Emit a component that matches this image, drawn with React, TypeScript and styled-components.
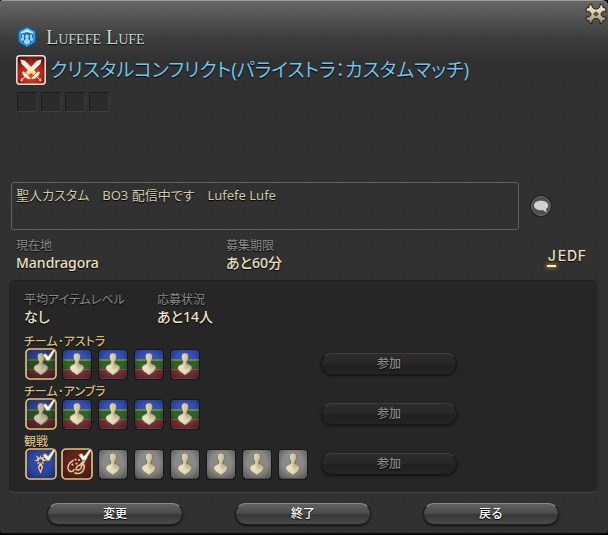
import React from "react";
import styled, { createGlobalStyle } from "styled-components";

const GlobalStyle = createGlobalStyle`
  * { box-sizing: border-box; }
  html, body, #root { height: 100%; }
  body {
    margin: 0;
    background: #000;
    font-family: "Noto Sans", "Noto Sans CJK JP", sans-serif;
    font-feature-settings: "palt";
  }
`;

const Window = styled.main`
  display: flex;
  flex-direction: column;
  min-height: 100%;
  border-top: 1px solid #a39a8c;
  border-bottom: 2px solid #0b0a06;
  border-radius: 3px 6px 4px 4px;
  color: #f0e2c4;
  text-shadow: 0 1px 1px #000;
  background:
    radial-gradient(circle at 6px 7px, rgba(0, 0, 0, 0.07) 0 1px, transparent 2px) 0 0 / 32px 32px,
    radial-gradient(circle at 20px 21px, rgba(0, 0, 0, 0.06) 0 1px, transparent 2px) 0 0 / 32px 32px,
    linear-gradient(#676767 0, #545454 16px, #3d3c3d 38px, #313131 60px, #313131 100%);
`;

const TitleBar = styled.header`
  display: flex;
  align-items: flex-start;
  justify-content: space-between;
  height: 54px;
  padding: 2px 1px 0 17px;
`;

const Owner = styled.div`
  display: flex;
  align-items: center;
  gap: 9px;
  padding-top: 20px;
`;

const OwnerName = styled.h1`
  margin: 0;
  font: 400 20px/28px "Liberation Serif", serif;
  font-variant-caps: small-caps;
  color: #c3d8cf;
`;

const IconButton = styled.button`
  display: grid;
  place-items: center;
  padding: 0;
  border: 0;
  background: none;
  cursor: pointer;
`;

const Duty = styled.section`
  display: flex;
  align-items: center;
  gap: 4px;
  padding: 0 16px;
`;

const DutyName = styled.h2`
  margin: 0;
  font-size: 19px;
  font-weight: 400;
  line-height: 30px;
  color: #72c3ec;
`;

const Conditions = styled.div`
  display: flex;
  gap: 4px;
  padding: 7px 17px 0;
`;

const ConditionSlot = styled.span`
  width: 20px;
  height: 20px;
  border: 1px solid;
  border-color: #1b1b1b #3c3c3c #404040 #1e1e1e;
  border-radius: 2px;
  background: #2b2b2b;
`;

const CommentRow = styled.section`
  display: flex;
  align-items: center;
  gap: 10px;
  margin-top: 70px;
  padding: 0 55px 0 11px;
`;

const Comment = styled.textarea`
  flex: 1;
  height: 48px;
  padding: 3px 4px;
  border: 1px solid #626262;
  border-radius: 3px;
  outline: 0;
  resize: none;
  background: transparent;
  color: #d2c9ac;
  font: 400 13px/18px "Noto Sans", "Noto Sans CJK JP", sans-serif;
  font-feature-settings: "palt";
  text-shadow: inherit;
`;

const InfoRow = styled.section`
  display: grid;
  grid-template-columns: 210px 1fr auto;
  padding: 8px 21px 0 16px;
`;

const Stats = styled.div`
  display: grid;
  grid-template-columns: 133px 1fr;
`;

const Label = styled.dt`
  font-size: 12px;
  line-height: 16px;
  color: #8b8b8b;
`;

const Value = styled.dd`
  margin: 0;
  font-size: 14px;
  font-weight: 500;
  line-height: 18px;
`;

const Fact = styled.dl`
  margin: 0;
`;

const Languages = styled.div`
  display: flex;
  padding-top: 11px;
`;

const Language = styled.span<{ $on?: boolean }>`
  display: flex;
  flex-direction: column;
  align-items: center;
  min-width: 10px;
  font: 500 14px/14px Inter, sans-serif;
  color: #efe0c2;

  &::after {
    content: "";
    width: 9px;
    height: 2px;
    margin-top: 2px;
    background: ${({ $on }) => ($on ? "#fffbe6" : "transparent")};
    box-shadow: ${({ $on }) => ($on ? "0 0 4px 1px #b0741b" : "none")};
  }
`;

const Panel = styled.section`
  margin: 8px 10px 0 9px;
  padding: 11px 14px 11px;
  border: 1px solid;
  border-color: #1f1f1f #2b2b2b #454545 #222;
  border-radius: 6px;
  background: #262626;
`;

const Teams = styled.div`
  display: flex;
  flex-direction: column;
  padding-top: 5px;
`;

const Team = styled.section`
  display: grid;
  grid-template-columns: 297px 136px;
  align-items: end;
  height: 50px;
`;

const TeamName = styled.h3`
  margin: 0;
  font-size: 12px;
  font-weight: 500;
  line-height: 12px;
  color: #d9b97d;
`;

const Seats = styled.div`
  display: flex;
  gap: 4px;
  padding-left: 1px;
  height: 33px;
`;

const PillButton = styled.button`
  height: 22px;
  width: 136px;
  padding: 0;
  border: 1px solid #1d1d1d;
  border-top-color: #8a8a8a;
  border-radius: 11px;
  background: linear-gradient(#616161 0, #4c4c4c 45%, #373737 55%, #4a4a4a 100%);
  box-shadow: 0 1px 2px #111;
  color: #fff;
  font: 500 12px/20px "Noto Sans", "Noto Sans CJK JP", sans-serif;
  text-shadow: 0 1px 1px #000;
  cursor: pointer;

  &:disabled {
    margin-bottom: 6px;
    border-color: #191919;
    border-top-color: #3f3f3f;
    background: linear-gradient(#2c2c2c 0, #272727 50%, #202020 55%, #242424 100%);
    color: #8b8b8b;
    cursor: default;
  }
`;

const Actions = styled.footer`
  display: grid;
  grid-template-columns: repeat(3, 1fr);
  justify-items: center;
  padding: 10px 23px 8px 21px;
`;

const PartyIcon = () => (
  <svg width="20" height="22" viewBox="0 0 20 22" aria-hidden="true">
    <path d="M10 1.500 18 5.500v10l-8 5-8-5v-10z" fill="#1278c4" stroke="#0d5fae" strokeWidth="2" strokeLinejoin="round" />
    <path d="M10 2.500 17 6v9.300l-7 4.400-7-4.400V6z" fill="#1b78c8" stroke="#55bdfb" strokeWidth="1.200" strokeLinejoin="round" />
    <path d="M4 6.200 10 3.200l6 3v1.600L10 6 4 7.800z" fill="#c8f2ff" />
    <g fill="#8fd8ff" stroke="#0b4f98" strokeWidth=".8">
      <path d="M3.300 15c0-2.500.4-3.200 1.400-3.700C3.600 9.500 4.200 7.800 5.900 7.800s2.300 1.700 1.300 3.500l.8 4.500zM16.700 15c0-2.500-.4-3.200-1.400-3.700 1.100-1.800.5-3.500-1.200-3.500s-2.300 1.700-1.300 3.500l-.8 4.500z" />
      <path d="M6.300 17.200c0-2.700.6-3.700 2.200-4.200-1.500-2.300-.8-4.900 1.500-4.900s3 2.600 1.500 4.900c1.600.5 2.200 1.500 2.200 4.200L10 19.400z" />
    </g>
  </svg>
);

const SwordsIcon = () => (
  <svg width="30" height="30" viewBox="0 0 30 30" aria-hidden="true">
    <defs>
      <radialGradient id="duty" cx=".5" cy=".65" r=".65">
        <stop offset="0" stopColor="#e8432f" />
        <stop offset=".6" stopColor="#b3241d" />
        <stop offset="1" stopColor="#5f1613" />
      </radialGradient>
      <linearGradient id="steel" x1="0" y1="0" x2="0" y2="1">
        <stop offset="0" stopColor="#fff" />
        <stop offset=".6" stopColor="#fff3cd" />
        <stop offset="1" stopColor="#ffc95c" />
      </linearGradient>
    </defs>
    <rect x=".8" y=".8" width="28.400" height="28.400" rx="3" fill="url(#duty)" stroke="#e9e3df" strokeWidth="1.500" />
    <g fill="url(#steel)">
      <path d="M25.500 4.500 21 5.800 9.600 17.600l2.800 2.800L24.300 9z" />
      <path d="m6.200 17 1.500-.6 7 6.600-.8 1.300-2.800-.6-1.800-1.600-2.400 2.200.2 1.200-1.800.9-.9-.9.800-1.900 1.300.1 2.100-2.300-1.700-1.700z" />
      <path d="M4.500 4.500 9 5.800l11.400 11.800-2.800 2.800L5.700 9z" />
      <path d="m23.800 17-1.500-.6-7 6.600.8 1.300 2.800-.6 1.800-1.600 2.400 2.200-.2 1.200 1.800.9.9-.9-.8-1.900-1.300.1-2.100-2.300 1.700-1.700z" />
    </g>
  </svg>
);

const CloseIcon = () => (
  <svg width="22" height="22" viewBox="0 0 22 22" aria-hidden="true">
    <defs>
      <linearGradient id="brass" x1="0" y1="0" x2="0" y2="1">
        <stop offset="0" stopColor="#f0e8c8" />
        <stop offset=".45" stopColor="#e0d3a8" />
        <stop offset="1" stopColor="#8d7568" />
      </linearGradient>
    </defs>
    <path
      d="M7 1c-.5 2.500.5 5 4 5s4.500-2.500 4-5l2.800 1.200L18 4.500l2.500.5.8 3.300c-3-.3-5.300.500-5.300 2.900s2.300 3.200 5.300 2.900L20.500 17l-2.500.5-.2 2.300L15 21c.5-2.500-.5-5.500-4-5.500S6.500 18.500 7 21l-2.800-1.200L4 17.500 1.500 17l-.8-2.900c3 .3 5.300-.5 5.300-2.900S3.700 8 .7 8.300L1.500 5 4 4.500l.2-2.300z"
      fill="url(#brass)" stroke="#1c1916" strokeWidth="1"
    />
    <path d="m11 8.200 3.200 2.800-3.200 2.800L7.800 11z" fill="#55534f" />
  </svg>
);

const ChatIcon = () => (
  <svg width="24" height="24" viewBox="0 0 24 24" aria-hidden="true">
    <circle cx="12" cy="12" r="11" fill="#1d1d1d" />
    <circle cx="12" cy="12" r="9.500" fill="#4c4f4e" stroke="#6c6f6e" strokeWidth="1" />
    <path d="M12 6.800c4.300 0 7.200 2 7.200 4.600 0 1.500-.8 2.600-2 3.400l.2 4-3-2.600c-5.200.6-9.400-1.600-9.400-4.800 0-2.600 2.900-4.600 7-4.600z" fill="#d2d0d0" />
  </svg>
);

type SeatKind = "any" | "free" | "tank" | "crafter";

const base: Record<SeatKind, string> = { any: "#3350bb", free: "#8a8a88", tank: "#2c48a6", crafter: "#60241f" };

const Seat = ({ kind, taken }: { kind: SeatKind; taken?: boolean }) => (
  <svg width="32" height="33" viewBox="0 1 32 33" role="img" aria-label={taken ? "taken" : "open"}>
    <defs>
      <clipPath id="tile"><rect x="2" y="3" width="28" height="28" rx="3" /></clipPath>
      <radialGradient id="shade" cx=".5" cy=".45" r=".72">
        <stop offset=".5" stopColor="#000" stopOpacity="0" />
        <stop offset="1" stopColor="#000" stopOpacity=".4" />
      </radialGradient>
      <linearGradient id="stone" x1="0" y1="0" x2="1" y2="0">
        <stop offset="0" stopColor="#efe5c6" />
        <stop offset=".5" stopColor="#d8cca8" />
        <stop offset="1" stopColor="#a89d80" />
      </linearGradient>
    </defs>
    <rect x="1" y="2" width="30" height="31" rx="4" fill="#171717" />
    <g clipPath="url(#tile)">
      <rect x="2" y="3" width="28" height="28" fill={base[kind]} />
      {kind === "any" && (
        <>
          <path d="M2 12h28v10H2z" fill="#2f6227" />
          <path d="M2 12h28v2H2z" fill="#6b8a34" />
          <path d="M2 22h28v9H2z" fill="#80323a" />
          <path d="M2 22h28v1H2z" fill="#9a5a4d" />
        </>
      )}
      <rect x="2" y="3" width="28" height="28" fill="url(#shade)" />
      {taken && kind === "any" && <rect x="2" y="3" width="28" height="28" fill="#1c1c1c" fillOpacity=".3" />}
    </g>
    <path d="M4 31.500h24" stroke="#4a4a4a" />
    {(kind === "any" || kind === "free") && (
      <g opacity={taken ? 0.85 : 1}>
        <path
          d="M16 6c2.400 0 3.700 1.500 3.600 4-.1 1.800-.7 3-1.400 4v2.600c2 1 4.500 2 5 3.700.3 1.900-1.200 3.700-2.500 4.700L16 28.200 11.300 25c-1.300-1-2.800-2.800-2.500-4.700.5-1.700 3-2.700 5-3.700V14c-.7-1-1.300-2.200-1.400-4-.1-2.500 1.200-4 3.600-4z"
          fill="url(#stone)" stroke="#35322a" strokeOpacity=".5" strokeWidth=".7"
        />
        <path d="M16.500 14.500c.8 0 1.200-.2 1.700-.5v2.600l-1.200 3z" fill="#7c735d" fillOpacity=".5" />
        <path d="m9.600 20.500 4.200-2.500 3 4.500 5.300-3.500-1.600 4.800L16 27z" fill="#f3e9c9" fillOpacity=".5" />
      </g>
    )}
    {kind === "tank" && (
      <g fill="#ecd69b" stroke="#16204c" strokeWidth=".4">
        <path d="m15.500 6.500 1 4 4.500-2.700-2.300 4.200 4.300 2-5 .6 1.700 3.400-3.200-1.700 2 3.700-3 7.500-3-7.500 2-3.700-3.200 1.700 1.700-3.400-5-.6 4.300-2-2.300-4.200 4.500 2.700z" />
        <circle cx="15.500" cy="14" r="1.700" fill="#2947a0" />
        <path d="m15.500 19 .8 1.500-.8 2.500-.8-2.500z" fill="#2947a0" />
      </g>
    )}
    {kind === "crafter" && (
      <g fill="none" stroke="#e6cc98" strokeWidth="1.500" strokeLinecap="round">
        <path d="M12 13.500c-4.500 2.500-6.200 7-4.300 9.700 1.600 2.200 4.800 1.600 5.300-.7M14 26c4 1.500 8-.5 9-4.500.5-2 .2-3.500-.8-5" />
        <path d="m26 10-7 8c-2.500.5-4.300 2.500-3.800 4.700 2.800.8 5.300-.5 5.300-3.700z" />
        <path d="M14.500 12.500v.1M18 13v.1M11.500 17.500v.1M15.500 16.500v.1" strokeWidth="2.200" />
      </g>
    )}
    {taken && (
      <>
        <rect x="1" y="2" width="30" height="30" rx="4" fill="none" stroke="#7c5a30" strokeWidth="2" />
        <rect x="1" y="2" width="30" height="30" rx="4" fill="none" stroke="#f5d79c" strokeWidth="1.200" />
        <path d="m17.500 7.800 3.300-1.300 2.200 2.800L28.500 2.200l2.300.3-6.500 11.300h-2.600z" fill="#fffdf2" stroke="#9a6a3e" strokeWidth=".8" />
      </>
    )}
  </svg>
);

const open = (kind: SeatKind, count: number) => Array.from({ length: count }, () => ({ kind, taken: false }));

const teams = [
  { name: "チーム･アストラ", seats: [{ kind: "any" as SeatKind, taken: true }, ...open("any", 4)] },
  { name: "チーム･アンブラ", seats: [{ kind: "any" as SeatKind, taken: true }, ...open("any", 4)] },
  {
    name: "観戦",
    seats: [
      { kind: "tank" as SeatKind, taken: true },
      { kind: "crafter" as SeatKind, taken: true },
      ...open("free", 6),
    ],
  },
];

export default function App() {
  return (
    <>
      <GlobalStyle />
      <Window lang="ja">
        <TitleBar>
          <Owner>
            <PartyIcon />
            <OwnerName>Lufefe Lufe</OwnerName>
          </Owner>
          <IconButton aria-label="閉じる"><CloseIcon /></IconButton>
        </TitleBar>
        <Duty>
          <SwordsIcon />
          <DutyName>クリスタルコンフリクト(パライストラ：カスタムマッチ)</DutyName>
        </Duty>
        <Conditions>
          <ConditionSlot />
          <ConditionSlot />
          <ConditionSlot />
          <ConditionSlot />
        </Conditions>
        <CommentRow>
          <Comment aria-label="コメント" readOnly defaultValue="聖人カスタム　BO3 配信中です　Lufefe Lufe" />
          <IconButton aria-label="チャット"><ChatIcon /></IconButton>
        </CommentRow>
        <InfoRow>
          <Fact>
            <Label>現在地</Label>
            <Value>Mandragora</Value>
          </Fact>
          <Fact>
            <Label>募集期限</Label>
            <Value>あと60分</Value>
          </Fact>
          <Languages>
            <Language $on>J</Language>
            <Language>E</Language>
            <Language>D</Language>
            <Language>F</Language>
          </Languages>
        </InfoRow>
        <Panel>
          <Stats>
            <Fact>
              <Label>平均アイテムレベル</Label>
              <Value>なし</Value>
            </Fact>
            <Fact>
              <Label>応募状況</Label>
              <Value>あと14人</Value>
            </Fact>
          </Stats>
          <Teams>
            {teams.map((team) => (
              <Team key={team.name}>
                <div>
                  <TeamName>{team.name}</TeamName>
                  <Seats>
                    {team.seats.map((seat, i) => (
                      <Seat key={i} kind={seat.kind} taken={seat.taken} />
                    ))}
                  </Seats>
                </div>
                <PillButton disabled>参加</PillButton>
              </Team>
            ))}
          </Teams>
        </Panel>
        <Actions>
          <PillButton>変更</PillButton>
          <PillButton>終了</PillButton>
          <PillButton>戻る</PillButton>
        </Actions>
      </Window>
    </>
  );
}
